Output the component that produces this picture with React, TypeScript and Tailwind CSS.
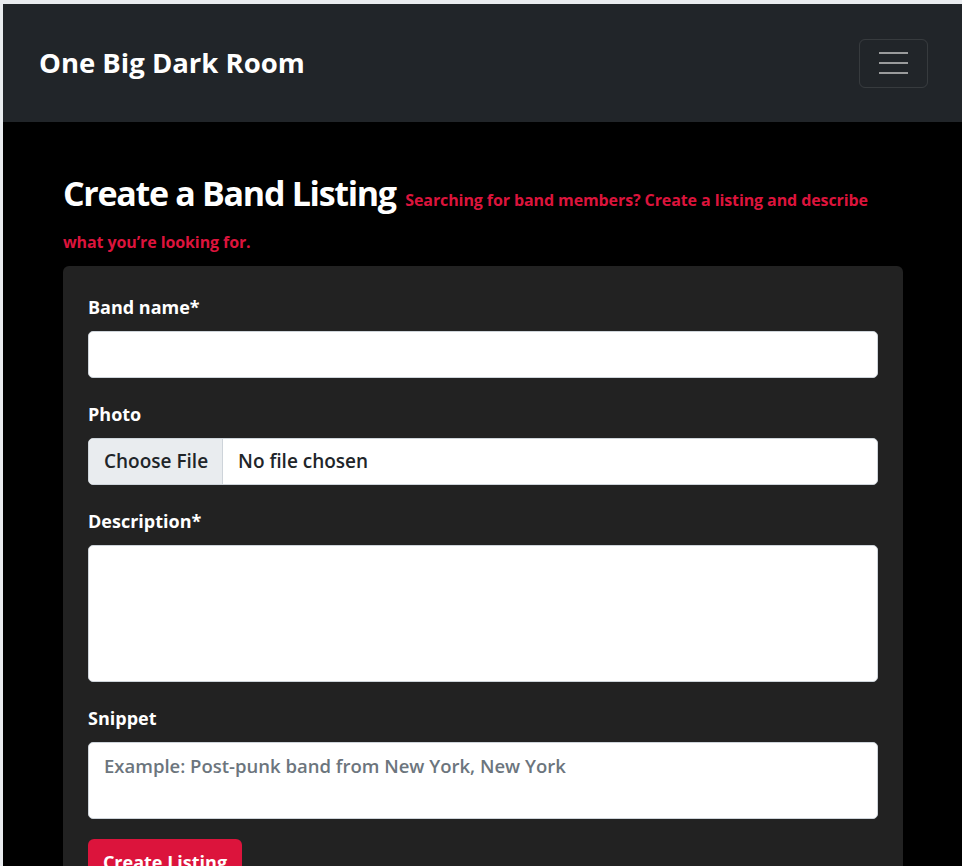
import React from "react";

export default function App() {
  const font = { fontFamily: '"Open Sans", "Noto Sans", sans-serif' };
  return (
    <div className="min-h-[866px] bg-[#e9ecef] pt-[4px] pl-[3px]" style={font}>
      <div className="min-h-[862px] bg-black">
        <nav className="flex h-[118px] items-center justify-between bg-[#212529] pl-[36px] pr-[34px]">
          <span className="text-[27.5px] font-bold leading-none text-white">One Big Dark Room</span>
          <button className="flex h-[49px] w-[69px] flex-col items-center justify-center gap-[8px] rounded-[6px] border border-white/10">
            <span className="block h-[2px] w-[29px] bg-[#9a9b9c]" />
            <span className="block h-[2px] w-[29px] bg-[#9a9b9c]" />
            <span className="block h-[2px] w-[29px] bg-[#9a9b9c]" />
          </button>
        </nav>
        <main className="pl-[60px] pr-[59px] pt-[50px]">
          <h1 className="mb-[10px] text-[34px] font-bold leading-[42px] tracking-[-1.3px] text-white">
            Create a Band Listing{" "}
            <span className="ml-[2px] text-[16px] font-bold leading-none tracking-[-0.1px] text-[#dc143c]">
              Searching for band members? Create a listing and describe what you’re looking for.
            </span>
          </h1>
          <div className="rounded-[6px] bg-[#222222] p-[25px]">
            <div className="flex flex-col gap-[20px]">
              <div>
                <label className="mb-[8px] block text-[18px] font-bold leading-[32px] text-white">Band name*</label>
                <div className="h-[47px] rounded-[5px] border border-[#ced4da] bg-white" />
              </div>
              <div>
                <label className="mb-[8px] block text-[18px] font-bold leading-[32px] text-white">Photo</label>
                <div className="flex h-[47px] items-center overflow-hidden rounded-[5px] border border-[#ced4da] bg-white text-[19px] font-semibold text-[#212529]">
                  <span className="flex h-full w-[134px] items-center border-r border-[#ced4da] bg-[#e9ecef] pl-[15px]">Choose File</span>
                  <span className="pl-[15px]">No file chosen</span>
                </div>
              </div>
              <div>
                <label className="mb-[8px] block text-[18px] font-bold leading-[32px] text-white">Description*</label>
                <div className="h-[137px] rounded-[5px] border border-[#ced4da] bg-white" />
              </div>
              <div>
                <label className="mb-[8px] block text-[18px] font-bold leading-[32px] text-white">Snippet</label>
                <div className="h-[77px] rounded-[5px] border border-[#ced4da] bg-white px-[15px] pt-[8px] text-[18.5px] font-semibold leading-[30px] text-[#6c757d]">
                  Example: Post-punk band from New York, New York
                </div>
              </div>
              <div>
                <button className="h-[47px] w-[154px] rounded-[6px] bg-[#dc143c] text-[18px] font-bold text-white">Create Listing</button>
              </div>
            </div>
          </div>
        </main>
      </div>
    </div>
  );
}
